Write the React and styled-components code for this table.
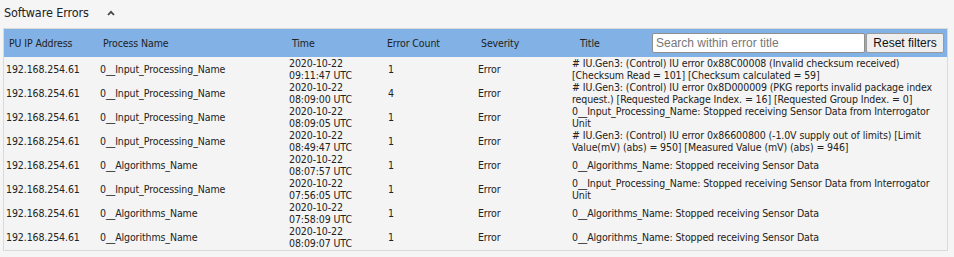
import styled, { createGlobalStyle } from 'styled-components';

const GlobalStyle = createGlobalStyle`
  body {
    margin: 0;
    background: #f5f5f5;
    font-family: "DejaVu Sans Condensed", "DejaVu Sans", sans-serif;
    color: #222;
  }
`;

const COLS = '94px 189px 99px 90px 94px 1fr';

const Page = styled.div`
  padding: 0 6px 6px 3px;
  width: 954px;
  box-sizing: border-box;
`;

const SectionHead = styled.div`
  height: 28px;
  display: flex;
  align-items: center;
  gap: 18px;
  padding-left: 1px;
  padding-bottom: 3px;
  box-sizing: border-box;
`;

const SectionTitle = styled.h2`
  margin: 0;
  font-size: 12.5px;
  font-weight: normal;
  letter-spacing: -0.1px;
  color: #222;
`;

const Panel = styled.div`
  border: 1px solid #dadada;
  background: #f4f4f4;
  padding-bottom: 1px;
`;

const Grid = styled.div`
  display: grid;
  grid-template-columns: ${COLS};
  font-size: 10.5px;
  letter-spacing: -0.1px;
  line-height: 12px;
`;

const HeadRow = styled(Grid)`
  background: #82b1e5;
  height: 28px;
  align-items: center;
`;

const HeadCell = styled.div`
  padding-left: ${(p) => p.$pad}px;
  white-space: nowrap;
`;

const TitleHead = styled(HeadCell)`
  display: flex;
  align-items: center;
  padding-right: 3px;
`;

const Search = styled.input`
  margin-left: auto;
  width: 213px;
  height: 20px;
  box-sizing: border-box;
  border: 1px solid #8f8f8f;
  border-radius: 2px;
  padding: 0 3px;
  font: 12px "Liberation Sans", Arial, sans-serif;
  color: #222;
  background: #fff;
  outline: none;

  &::placeholder {
    color: #777;
  }
`;

const ResetButton = styled.button`
  height: 20px;
  width: 78px;
  margin-left: 1px;
  box-sizing: border-box;
  border: 1px solid #9a9a9a;
  border-radius: 2px;
  background: #efefef;
  font: 12px "Liberation Sans", Arial, sans-serif;
  color: #111;
  padding: 0;
`;

const DataRow = styled(Grid)`
  height: 24px;
  align-items: center;
`;

const Cell = styled.div`
  padding-left: 2px;
  white-space: nowrap;
`;

const Line = styled.div`
  white-space: nowrap;
`;

const Chevron = () => (
  <svg width="8" height="6" viewBox="0 0 8 6">
    <polyline points="1,5 4,1.8 7,5" fill="none" stroke="#444" strokeWidth="1.8" />
  </svg>
);

const errors = [
  {
    process: '0__Input_Processing_Name',
    time: ['2020-10-22', '09:11:47 UTC'],
    count: 1,
    title: [
      '# IU.Gen3: (Control) IU error 0x88C00008 (Invalid checksum received)',
      '[Checksum Read = 101] [Checksum calculated = 59]',
    ],
  },
  {
    process: '0__Input_Processing_Name',
    time: ['2020-10-22', '08:09:00 UTC'],
    count: 4,
    title: [
      '# IU.Gen3: (Control) IU error 0x8D000009 (PKG reports invalid package index',
      'request.) [Requested Package Index. = 16] [Requested Group Index. = 0]',
    ],
  },
  {
    process: '0__Input_Processing_Name',
    time: ['2020-10-22', '08:09:05 UTC'],
    count: 1,
    title: ['0__Input_Processing_Name: Stopped receiving Sensor Data from Interrogator', 'Unit'],
  },
  {
    process: '0__Input_Processing_Name',
    time: ['2020-10-22', '08:49:47 UTC'],
    count: 1,
    title: [
      '# IU.Gen3: (Control) IU error 0x86600800 (-1.0V supply out of limits) [Limit',
      'Value(mV) (abs) = 950] [Measured Value (mV) (abs) = 946]',
    ],
  },
  {
    process: '0__Algorithms_Name',
    time: ['2020-10-22', '08:07:57 UTC'],
    count: 1,
    title: ['0__Algorithms_Name: Stopped receiving Sensor Data'],
  },
  {
    process: '0__Input_Processing_Name',
    time: ['2020-10-22', '07:56:05 UTC'],
    count: 1,
    title: ['0__Input_Processing_Name: Stopped receiving Sensor Data from Interrogator', 'Unit'],
  },
  {
    process: '0__Algorithms_Name',
    time: ['2020-10-22', '07:58:09 UTC'],
    count: 1,
    title: ['0__Algorithms_Name: Stopped receiving Sensor Data'],
  },
  {
    process: '0__Algorithms_Name',
    time: ['2020-10-22', '08:09:07 UTC'],
    count: 1,
    title: ['0__Algorithms_Name: Stopped receiving Sensor Data'],
  },
];

export default function App() {
  return (
    <Page>
      <GlobalStyle />
      <SectionHead>
        <SectionTitle>Software Errors</SectionTitle>
        <Chevron />
      </SectionHead>
      <Panel>
        <HeadRow>
          <HeadCell $pad={5}>PU IP Address</HeadCell>
          <HeadCell $pad={5}>Process Name</HeadCell>
          <HeadCell $pad={5}>Time</HeadCell>
          <HeadCell $pad={1}>Error Count</HeadCell>
          <HeadCell $pad={5}>Severity</HeadCell>
          <TitleHead $pad={10}>
            Title
            <Search placeholder="Search within error title" />
            <ResetButton>Reset filters</ResetButton>
          </TitleHead>
        </HeadRow>
        {errors.map((e, i) => (
          <DataRow key={i}>
            <Cell>192.168.254.61</Cell>
            <Cell>{e.process}</Cell>
            <Cell>
              {e.time.map((t) => (
                <Line key={t}>{t}</Line>
              ))}
            </Cell>
            <Cell>{e.count}</Cell>
            <Cell>Error</Cell>
            <Cell>
              {e.title.map((t) => (
                <Line key={t}>{t}</Line>
              ))}
            </Cell>
          </DataRow>
        ))}
      </Panel>
    </Page>
  );
}
